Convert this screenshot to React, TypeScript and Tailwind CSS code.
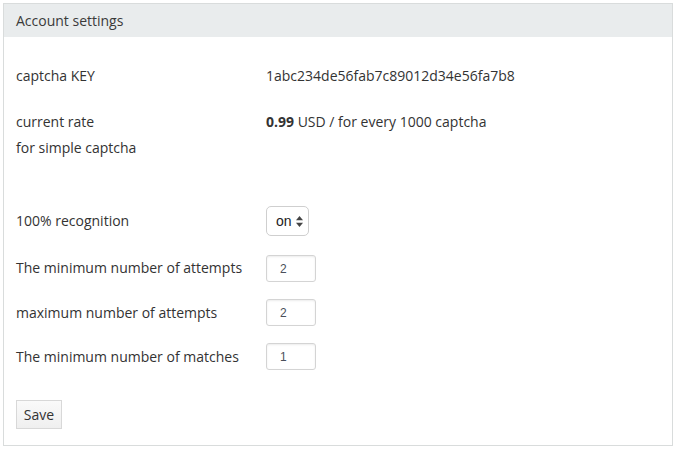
const font = { fontFamily: '"Open Sans", "Liberation Sans", sans-serif' };

function NumberField({ value }: { value: string }) {
  return (
    <div className="w-[50px] h-[27px] border border-[#d4d4d4] rounded-[3px] bg-white flex items-center pl-[13px] text-[12px] text-[#4a4f5a] shadow-[inset_0_1px_2px_rgba(0,0,0,0.08)] font-['Liberation_Sans',sans-serif]">
      {value}
    </div>
  );
}

export default function App() {
  return (
    <div className="w-[675px] h-[450px] bg-white pt-[3px] pl-[3px]" style={font}>
      <div className="w-[670px] h-[443px] border border-[#d9dcdc] flex flex-col text-[14px] text-[#333]">
        {/* Header */}
        <div className="h-[33px] bg-[#e9eced] flex items-center pl-[12px] text-[#3a3a3a]">
          Account settings
        </div>

        {/* Body */}
        <div className="flex flex-col pl-[12px] pt-[26px]">
          <div className="flex leading-[26px]">
            <div className="w-[250px]">captcha KEY</div>
            <div>1abc234de56fab7c89012d34e56fa7b8</div>
          </div>

          <div className="flex leading-[26px] mt-[20px]">
            <div className="w-[250px]">
              current rate
              <br />
              for simple captcha
            </div>
            <div>
              <b className="font-bold">0.99</b> USD / for every 1000 captcha
            </div>
          </div>

          <div className="flex items-center mt-[45px] h-[30px]">
            <div className="w-[250px] -mt-[1px]">100% recognition</div>
            <div className="h-[30px] w-[43px] border border-[#cfcfcf] rounded-[5px] flex items-center pl-[9px] gap-[4px] text-[14px] text-[#222] font-['Liberation_Sans',sans-serif]">
              on
              <svg width="7" height="11" viewBox="0 0 7 11" className="text-[#444]">
                <path d="M3.5 0 L7 4.2 L0 4.2 Z" fill="currentColor" />
                <path d="M0 6.8 L7 6.8 L3.5 11 Z" fill="currentColor" />
              </svg>
            </div>
          </div>

          <div className="flex items-center mt-[19px] h-[27px]">
            <div className="w-[250px] -mt-[2px]">The minimum number of attempts</div>
            <NumberField value="2" />
          </div>

          <div className="flex items-center mt-[17px] h-[27px]">
            <div className="w-[250px] -mt-[1px]">maximum number of attempts</div>
            <NumberField value="2" />
          </div>

          <div className="flex items-center mt-[17px] h-[27px]">
            <div className="w-[250px] -mt-[1px]">The minimum number of matches</div>
            <NumberField value="1" />
          </div>

          <div className="mt-[30px]">
            <button className="h-[29px] w-[46px] border border-[#d8d8d8] bg-gradient-to-b from-[#fafafa] to-[#efefef] text-[14px] text-[#333] flex items-center justify-center">
              Save
            </button>
          </div>
        </div>
      </div>
    </div>
  );
}
